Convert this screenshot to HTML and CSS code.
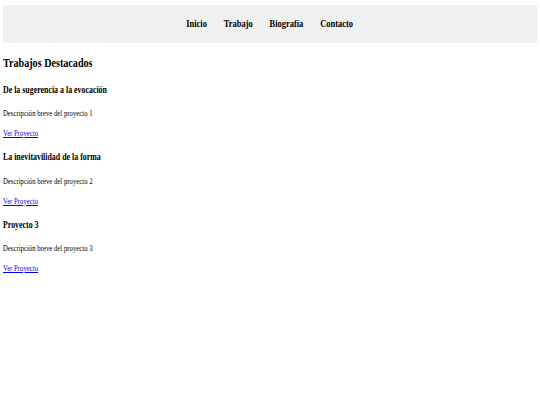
FILE: index.html
```html
<!DOCTYPE html>
<html lang="es">
<head>
<meta charset="utf-8">
<title>Trabajos Destacados</title>
<link rel="stylesheet" href="styles.css">
</head>
<body>
  <header class="site-header">
    <nav>
      <ul class="nav">
        <li><a href="#">Inicio</a></li>
        <li><a href="#">Trabajo</a></li>
        <li><a href="#">Biografía</a></li>
        <li><a href="#">Contacto</a></li>
      </ul>
    </nav>
  </header>
  <main class="content">
    <h2 class="title">Trabajos Destacados</h2>
    <article class="project">
      <h3 class="project-title">De la sugerencia a la evocación</h3>
      <p class="project-desc">Descripción breve del proyecto 1</p>
      <a class="project-link" href="#">Ver Proyecto</a>
    </article>
    <article class="project">
      <h3 class="project-title">La inevitavilidad de la forma</h3>
      <p class="project-desc">Descripción breve del proyecto 2</p>
      <a class="project-link" href="#">Ver Proyecto</a>
    </article>
    <article class="project">
      <h3 class="project-title">Proyecto 3</h3>
      <p class="project-desc">Descripción breve del proyecto 3</p>
      <a class="project-link" href="#">Ver Proyecto</a>
    </article>
  </main>
</body>
</html>
```
FILE: styles.css
```css
html {
  background: #fff;
}

body {
  margin: 4.7px 3.4px 0;
  font-family: "Liberation Serif", "Times New Roman", serif;
  color: #000;
}

/* header bar */
.site-header {
  background: #f0f0f0;
  padding: 12.6px 0;
}

.nav {
  list-style: none;
  margin: 0;
  padding: 0;
  display: flex;
  justify-content: center;
  gap: 22.5px;
  font-size: 11.25px;
  line-height: 13px;
  font-weight: bold;
  transform: scaleX(0.75);
  transform-origin: 50% 50%;
}

.nav a {
  color: #000;
  text-decoration: none;
}

/* content: narrow (condensed) type */
.content {
  transform: scaleX(0.75);
  transform-origin: 0 0;
}

.title {
  font-size: 13.5px;
  font-weight: bold;
  margin: 12px 0 12.9px;
}

.project {
  font-size: 9px;
}

.project-title {
  font-size: 10.53px;
  font-weight: bold;
  margin: 12.8px 0 13.6px;
}

.project-desc {
  margin: 0 0 10px;
}

.project-link {
  display: block;
  width: max-content;
  color: #0000ee;
  text-decoration: underline;
}
```
